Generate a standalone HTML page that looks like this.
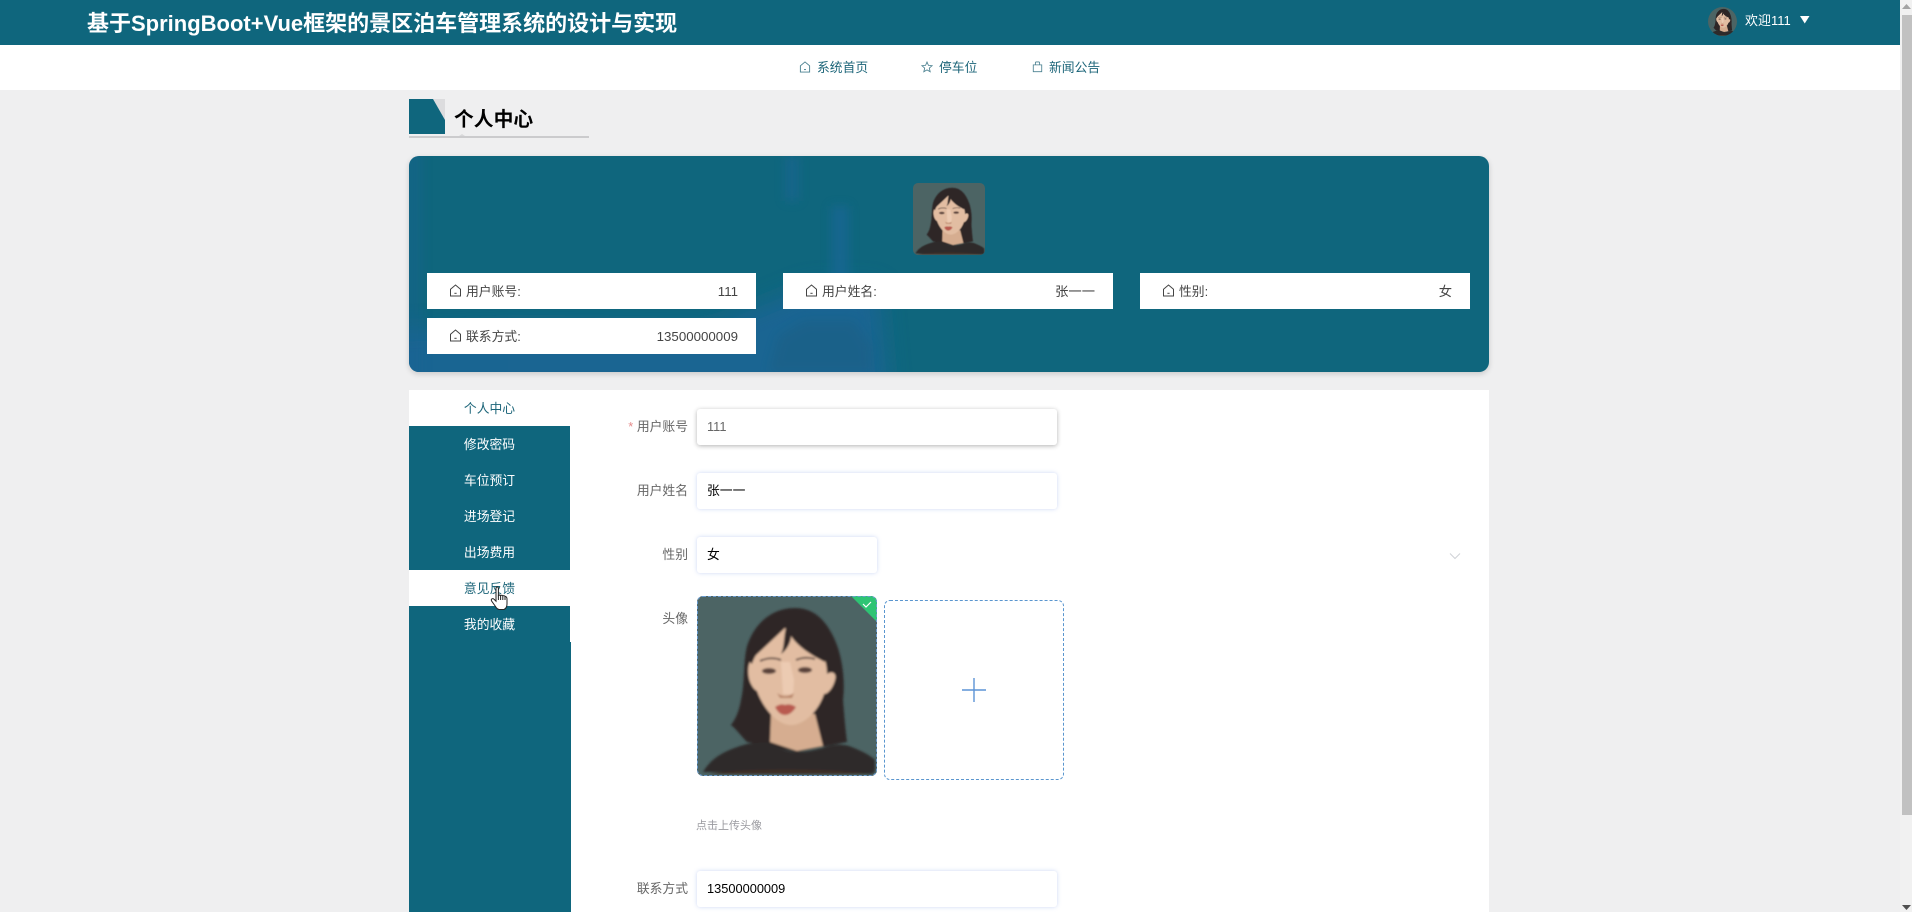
<!DOCTYPE html>
<html lang="zh-CN">
<head>
<meta charset="utf-8">
<title>基于SpringBoot+Vue框架的景区泊车管理系统的设计与实现</title>
<style>
html,body{margin:0;padding:0;width:1912px;height:912px;overflow:hidden;background:#efeff0}
body{position:relative;font-family:"Liberation Sans","Noto Sans CJK SC",sans-serif;font-size:12.8px;color:#333}
.a{position:absolute;white-space:nowrap}
.t{position:absolute;white-space:nowrap;line-height:20px}
.cell{position:absolute;width:330px;height:36px;background:#fff;line-height:37px;color:#444}
.cell svg{position:absolute;left:22px;top:11px}
.cell .l{position:absolute;left:39px}
.cell .v{position:absolute;right:18px;font-size:13.3px}
.side{position:absolute;left:409px;width:161px;height:36px;line-height:38px;text-align:center;color:#fff;background:#0f667d}
.side.on{background:#fff;color:#1c6579}
.lab{position:absolute;width:100px;left:588px;text-align:right;color:#666;line-height:20px}
.inp{position:absolute;left:697px;width:360px;height:36px;background:#fff;border-radius:3px;line-height:35px;box-sizing:border-box;padding-left:10px;color:#000;box-shadow:0 0 4px rgba(120,150,230,.38)}
</style>
</head>
<body>
<svg width="0" height="0" style="position:absolute">
<defs>
<filter id="soft"><feGaussianBlur stdDeviation="1.1"/></filter>
<filter id="soft3" x="-100%" y="-50%" width="300%" height="200%"><feGaussianBlur stdDeviation="5"/></filter>
<filter id="soft12" x="-20%" y="-40%" width="140%" height="180%"><feGaussianBlur stdDeviation="12"/></filter>
<symbol id="portrait" viewBox="0 0 180 180">
<rect width="180" height="180" fill="#4c6464"/>
<g filter="url(#soft)">
<path d="M98 12C76 12 58 26 50 50C46 66 48 88 44 104C42 116 38 124 34 129C40 134 44 140 50 146L100 156L150 146C148 130 147 116 146 104C148 86 146 68 141 52C132 26 118 12 98 12Z" fill="#2d2627"/>
<path d="M74 118L73 146L100 155L126 150L118 118Z" fill="#d6ad90"/>
<path d="M6 176C14 162 28 154 50 148C60 146 68 146 74 147C82 153 92 156 102 156C110 156 118 154 126 152C136 148 144 148 152 150C162 154 172 158 178 164L178 173Q178 178 173 178Z" fill="#2d2a29"/>
<path d="M12 178C40 172 140 172 172 178Z" fill="#3c2f26"/>
<path d="M56 62C50 66 50 80 54 88C56 92 58 94 60 95C66 112 80 129 94 129C108 129 122 114 127 98C131 98 136 92 138 84C140 78 136 74 130 78C130 70 128 60 122 50L88 32Z" fill="#e2bda2"/>
<path d="M84 34C74 42 60 52 55 68C50 64 50 54 56 44C64 30 76 26 84 34Z" fill="#2d2627"/>
<path d="M90 28C86 40 88 50 84 58C90 54 94 46 94 40C102 52 116 60 128 66C130 54 124 38 112 30Z" fill="#2d2627"/>
<path d="M84 66L86 98L96 99L97 84L93 66Z" fill="#efd0b7" opacity=".75"/>
<path d="M63 65Q74 60 84 64" stroke="#54403a" stroke-width="1.8" fill="none"/>
<path d="M99 64Q108 60 118 63" stroke="#54403a" stroke-width="1.8" fill="none"/>
<ellipse cx="72" cy="75" rx="7" ry="3" fill="#5a433b"/>
<ellipse cx="108" cy="74" rx="7" ry="3" fill="#5a433b"/>
<path d="M80 97Q88 103 97 97L95 102L83 102Z" fill="#b9866b"/>
<path d="M78 111Q84 107 88 109Q93 107 99 111Q94 119 88 119Q82 119 78 111Z" fill="#b95a50"/>
</g>
</symbol>
<symbol id="house" viewBox="0 0 13 13">
<path d="M1.5 5.2L6.5 1L11.5 5.2V12H1.5Z" fill="none" stroke="currentColor" stroke-width="1"/>
<path d="M5.4 9.3H7.6" stroke="currentColor" stroke-width="1"/>
</symbol>
</defs>
</svg>

<!-- top bar -->
<div class="a" style="left:0;top:0;width:1900px;height:45px;background:#0f667d"></div>
<div class="a" style="left:87px;top:9px;font-size:22px;font-weight:bold;color:#fff;line-height:30px;letter-spacing:0">基于SpringBoot+Vue框架的景区泊车管理系统的设计与实现</div>
<svg class="a" style="left:1708px;top:7px;border-radius:50%" width="29" height="29"><use href="#portrait" width="29" height="29"/></svg>
<div class="t" style="left:1745px;top:11px;color:#fff;font-size:13px">欢迎111</div>
<svg class="a" style="left:1800px;top:16px" width="10" height="8"><path d="M0 0H9.5L4.75 7.5Z" fill="#fff"/></svg>

<!-- nav -->
<div class="a" style="left:0;top:45px;width:1900px;height:45px;background:#fff"></div>
<svg class="a" style="left:799px;top:61px;color:#4a8090" width="12" height="12"><use href="#house" width="12" height="12"/></svg>
<div class="t" style="left:817px;top:58px;color:#1c6579">系统首页</div>
<svg class="a" style="left:921px;top:61px" width="12" height="12" viewBox="0 0 14 14"><path d="M7 1.2L8.7 5.1L12.9 5.5L9.7 8.3L10.7 12.5L7 10.3L3.3 12.5L4.3 8.3L1.1 5.5L5.3 5.1Z" fill="none" stroke="#4a8090" stroke-width="1"/></svg>
<div class="t" style="left:939px;top:58px;color:#1c6579">停车位</div>
<svg class="a" style="left:1032px;top:61px" width="11" height="12" viewBox="0 0 13 14"><path d="M1.5 4.5H11.5V12.5H1.5Z" fill="none" stroke="#4a8090" stroke-width="1"/><path d="M4 4.5V2Q4 1 5 1H8Q9 1 9 2V4.5" fill="none" stroke="#4a8090" stroke-width="1"/></svg>
<div class="t" style="left:1049px;top:58px;color:#1c6579">新闻公告</div>

<!-- section title -->
<div class="a" style="left:409px;top:99px;width:36px;height:35px;background:#0f667d"></div>
<svg class="a" style="left:433px;top:99px" width="12" height="21"><path d="M0 0H12V21Z" fill="#dcdcde"/></svg>
<div class="a" style="left:454px;top:105px;font-size:19.8px;font-weight:bold;color:#000;line-height:30px">个人中心</div>
<div class="a" style="left:409px;top:136px;width:180px;height:2px;background:#cbcbcd"></div>
<svg class="a" style="left:459px;top:134px" width="6" height="2"><path d="M0 2L3 0L6 2Z" fill="#d8d8da"/></svg>

<!-- info card -->
<div class="a" style="left:409px;top:156px;width:1080px;height:216px;background:#0f667d;border-radius:10px;overflow:hidden;box-shadow:0 2px 6px rgba(0,0,0,.16)">
<svg width="1080" height="216" style="position:absolute;left:0;top:0">
<path d="M-30 175L120 170L300 172L400 130L470 130L480 250L-30 250Z" fill="#1a6596" opacity=".85" filter="url(#soft12)"/>
<path d="M-20 -10L14 -10L14 226L-20 226Z" fill="#1a6596" opacity=".3" filter="url(#soft3)"/>
<path d="M376 0H390V45H376Z" fill="#1a6596" opacity=".55" filter="url(#soft3)"/>
<path d="M422 50H440V125H422Z" fill="#1c68a0" opacity=".5" filter="url(#soft3)"/>
<path d="M360 216L370 180L395 165L445 165L462 190L462 216Z" fill="#1d5c7e" opacity=".4" filter="url(#soft3)"/>
</svg>
</div>
<svg class="a" style="left:913px;top:183px;border-radius:5px" width="72" height="72"><use href="#portrait" width="72" height="72"/></svg>

<div class="cell" style="left:427px;top:273px;width:329px"><svg style="color:#444" width="13" height="13"><use href="#house" width="13" height="13"/></svg><span class="l">用户账号:</span><span class="v">111</span></div>
<div class="cell" style="left:783px;top:273px"><svg style="color:#444" width="13" height="13"><use href="#house" width="13" height="13"/></svg><span class="l">用户姓名:</span><span class="v">张一一</span></div>
<div class="cell" style="left:1140px;top:273px"><svg style="color:#444" width="13" height="13"><use href="#house" width="13" height="13"/></svg><span class="l">性别:</span><span class="v">女</span></div>
<div class="cell" style="left:427px;top:318px;width:329px"><svg style="color:#444" width="13" height="13"><use href="#house" width="13" height="13"/></svg><span class="l">联系方式:</span><span class="v">13500000009</span></div>

<!-- content panel -->
<div class="a" style="left:570px;top:390px;width:919px;height:522px;background:#fff"></div>

<!-- sidebar -->
<div class="a" style="left:409px;top:642px;width:162px;height:270px;background:#0f667d"></div>
<div class="side on" style="top:390px">个人中心</div>
<div class="side" style="top:426px">修改密码</div>
<div class="side" style="top:462px">车位预订</div>
<div class="side" style="top:498px">进场登记</div>
<div class="side" style="top:534px">出场费用</div>
<div class="side on" style="top:570px">意见反馈</div>
<div class="side" style="top:606px">我的收藏</div>

<!-- form -->
<div class="lab" style="top:417px"><span style="color:#e58a8a">* </span>用户账号</div>
<div class="inp" style="top:409px;color:#666;box-shadow:0 1px 5px rgba(0,0,0,.3)">111</div>
<div class="lab" style="top:481px">用户姓名</div>
<div class="inp" style="top:473px">张一一</div>
<div class="lab" style="top:545px">性别</div>
<div class="inp" style="top:537px;width:180px">女</div>
<svg class="a" style="left:1449px;top:552px" width="12" height="8"><path d="M1 1.5L6 6.5L11 1.5" fill="none" stroke="#cfd2d6" stroke-width="1"/></svg>
<div class="lab" style="top:609px">头像</div>

<!-- uploaded image -->
<div class="a" style="left:697px;top:596px;width:180px;height:180px;border-radius:6px;overflow:hidden">
<svg width="180" height="180" style="display:block"><use href="#portrait" width="180" height="180"/>
<path d="M154 0H180V26Z" fill="#2ec474"/>
<path d="M166 8L169 11L174 6" fill="none" stroke="#fff" stroke-width="1.2"/></svg>
</div>
<div class="a" style="left:697px;top:596px;width:180px;height:180px;box-sizing:border-box;border:1px dashed #6a9bd0;border-radius:6px"></div>

<!-- upload box -->
<div class="a" style="left:884px;top:600px;width:180px;height:180px;box-sizing:border-box;border:1px dashed #5a96cf;border-radius:6px;background:#fff"></div>
<svg class="a" style="left:962px;top:678px" width="24" height="24"><path d="M0 12H24M12 0V24" stroke="#5c93d6" stroke-width="1.4"/></svg>

<div class="a" style="left:696px;top:818px;font-size:11px;color:#9a9aa0;line-height:16px">点击上传头像</div>

<div class="lab" style="top:879px">联系方式</div>
<div class="inp" style="top:871px">13500000009</div>

<!-- cursor -->
<svg class="a" style="left:490px;top:586px" width="20" height="25" viewBox="0 0 20 25">
<path d="M6 2.2Q6 1 7.2 1Q8.4 1 8.4 2.2V9.5Q9.6 8.6 10.6 9.5Q11.8 8.8 12.8 9.8Q14 9.2 15 10.2Q17 10.8 17 13V18Q17 22 14 23.5H9Q7 23 5.5 20.5L1.6 15Q0.8 13.4 2 12.8Q3.2 12.2 4.2 13.4L6 15.2Z" fill="#fff" stroke="#222" stroke-width="1"/>
<path d="M8.4 9.5V14M10.6 9.5V14M12.8 9.8V14M15 10.2V14" stroke="#222" stroke-width="1" fill="none"/>
</svg>

<!-- scrollbar -->
<div class="a" style="left:1900px;top:0;width:12px;height:912px;background:#f1f1f1"></div>
<svg class="a" style="left:1902px;top:3px" width="10" height="7"><path d="M0 6H9L4.5 1Z" fill="#a3a3a3"/></svg>
<div class="a" style="left:1902px;top:15px;width:10px;height:800px;background:#c1c1c1"></div>
<svg class="a" style="left:1902px;top:904px" width="10" height="7"><path d="M0 1H9L4.5 6Z" fill="#505050"/></svg>
</body>
</html>
